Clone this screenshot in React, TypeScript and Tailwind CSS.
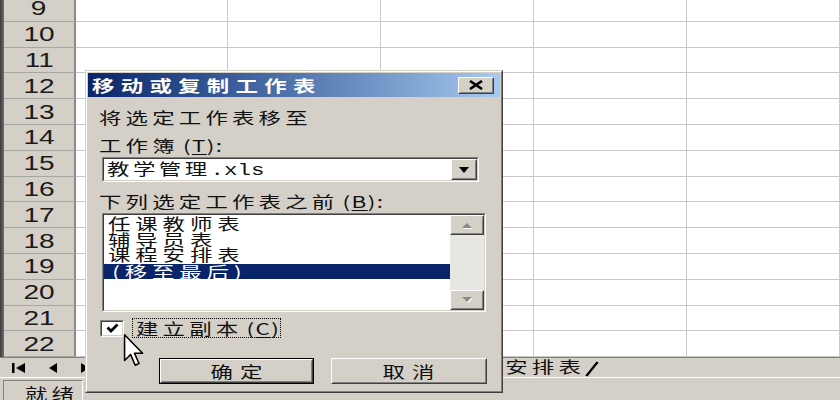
import React from 'react';

const ROWS = [9, 10, 11, 12, 13, 14, 15, 16, 17, 18, 19, 20, 21, 22];
const COLS = [152, 153, 153, 153, 153];

const cjk = "font-['Noto_Sans_CJK_SC','Noto_Sans',sans-serif]";

// the capture is stretched sideways, so CJK text is widened the same way
function Wide({ className = '', children }: { className?: string; children?: React.ReactNode }) {
  return (
    <span className={`inline-block origin-left scale-x-[1.4] whitespace-nowrap ${className}`}>
      {children}
    </span>
  );
}

function Raised({ className = '', children }: { className?: string; children?: React.ReactNode }) {
  return (
    <div
      className={`border border-t-white border-l-white border-r-[#404040] border-b-[#404040] bg-[#d4d0c8] ${className}`}
    >
      <div className="w-full h-full border border-t-[#d4d0c8] border-l-[#d4d0c8] border-r-[#808080] border-b-[#808080] flex items-center justify-center">
        {children}
      </div>
    </div>
  );
}

function Sunken({ className = '', children }: { className?: string; children?: React.ReactNode }) {
  return (
    <div
      className={`border border-t-[#808080] border-l-[#808080] border-r-white border-b-white ${className}`}
    >
      <div className="w-full h-full border border-t-[#404040] border-l-[#404040] border-r-[#d4d0c8] border-b-[#d4d0c8] bg-white flex">
        {children}
      </div>
    </div>
  );
}

function ScrollArrow({ up }: { up?: boolean }) {
  const d = up ? 'M2 7 L7 2 L12 7 Z' : 'M2 1 L7 6 L12 1 Z';
  return (
    <svg width="14" height="8" viewBox="0 0 14 8">
      <path d={d} fill="#ffffff" transform="translate(1 1)" />
      <path d={d} fill="#8a8a8a" />
    </svg>
  );
}

function Dialog() {
  return (
    <div className="absolute left-[85px] top-[70px] w-[418px] h-[323px] border border-t-[#d4d0c8] border-l-[#d4d0c8] border-r-[#404040] border-b-[#404040] bg-[#d4d0c8]">
      <div className="h-full border border-t-white border-l-white border-r-[#808080] border-b-[#808080] p-px flex flex-col">
        {/* title bar */}
        <div className="h-[24px] flex items-center justify-between bg-linear-to-r from-[#0a246a] to-[#a6caf0] pl-[4px] pr-[6px]">
          <Wide className="text-[16px] font-bold tracking-[4.5px] text-white leading-none">
            移动或复制工作表
          </Wide>
          <Raised className="w-[36px] h-[17px]">
            <svg width="16" height="10" viewBox="0 0 16 10">
              <path d="M2 1 L14 9 M14 1 L2 9" stroke="#000" strokeWidth="2.6" />
            </svg>
          </Raised>
        </div>

        <div className="text-[16px] text-[#111] pl-[11px] flex flex-col">
          <div className="mt-[10px] h-[20px] leading-[20px]">
            <Wide className="tracking-[3px]">将选定工作表移至</Wide>
          </div>
          <div className="mt-[8px] h-[20px] leading-[20px]">
            <Wide className="tracking-[3px]">
              工作簿<span className="tracking-[1px] ml-[3px]">(<span className="underline underline-offset-2">T</span>):</span>
            </Wide>
          </div>

          {/* workbook combo */}
          <Sunken className="mt-[2px] ml-[3px] w-[377px] h-[25px]">
            <div className="flex-1 flex items-center pl-[3px] leading-none">
              <Wide className="tracking-[2.5px]">
                教学管理<span className="font-['Liberation_Mono',monospace] tracking-[0px]">.xls</span>
              </Wide>
            </div>
            <Raised className="w-[26px] h-[21px]">
              <svg width="10" height="6" viewBox="0 0 10 6">
                <path d="M0 0 H10 L5 6 Z" fill="#000" />
              </svg>
            </Raised>
          </Sunken>

          <div className="mt-[9px] h-[20px] leading-[20px]">
            <Wide className="tracking-[3px]">
              下列选定工作表之前<span className="tracking-[1px] ml-[3px]">(<span className="underline underline-offset-2">B</span>):</span>
            </Wide>
          </div>

          {/* sheet list */}
          <Sunken className="mt-[2px] ml-[3px] w-[384px] h-[99px]">
            <div className="flex-1 pt-[1px] leading-[15px]">
              <div className="h-[15.5px] pl-[4px]">
                <Wide className="tracking-[3.5px]">任课教师表</Wide>
              </div>
              <div className="h-[15.5px] pl-[4px]">
                <Wide className="tracking-[3.5px]">辅导员表</Wide>
              </div>
              <div className="h-[15.5px] pl-[4px]">
                <Wide className="tracking-[3.5px]">课程安排表</Wide>
              </div>
              <div className="mt-[1px] h-[15.5px] pl-[4px] bg-[#0a246a] text-white">
                <Wide className="tracking-[3.5px]">
                  <span className="ml-[3px]">(</span>移至最后)
                </Wide>
              </div>
            </div>
            <div className="w-[34px] flex flex-col bg-[#e8e6e1]">
              <Raised className="w-full h-[20px]">
                <ScrollArrow up />
              </Raised>
              <div className="flex-1" />
              <Raised className="w-full h-[20px]">
                <ScrollArrow />
              </Raised>
            </div>
          </Sunken>

          {/* copy checkbox */}
          <div className="mt-[6px] h-[20px] flex items-center">
            <Sunken className="ml-px w-[24px] h-[17px]">
              <div className="flex-1 flex items-center justify-center">
                <svg width="13" height="10" viewBox="0 0 13 10">
                  <path d="M1.5 4.5 L5 8 L11.5 1.5" stroke="#000" strokeWidth="2.8" fill="none" />
                </svg>
              </div>
            </Sunken>
            <div className="ml-[8px] h-[20px] w-[149px] border border-dotted border-black flex items-center pl-[3px] leading-none">
              <Wide className="tracking-[3px]">
                建立副本<span className="tracking-[1px] ml-[3px]">(<span className="underline underline-offset-2">C</span>)</span>
              </Wide>
            </div>
          </div>

          {/* buttons */}
          <div className="mt-[20px] flex gap-[17px] pl-[60px]">
            <div className="border border-black">
              <Raised className="w-[153px] h-[24px]">
                <span className="inline-block scale-x-[1.4] tracking-[5px] pl-[5px] leading-none">确定</span>
              </Raised>
            </div>
            <Raised className="w-[156px] h-[26px]">
              <span className="inline-block scale-x-[1.4] tracking-[5px] pl-[5px] leading-none">取消</span>
            </Raised>
          </div>
        </div>
      </div>
    </div>
  );
}

export default function App() {
  return (
    <div className={`relative w-[840px] h-[400px] overflow-hidden bg-white ${cjk}`}>
      {/* worksheet grid */}
      <div className="h-[357px] overflow-hidden">
        <div className="-mt-[4px]">
          {ROWS.map((n) => (
            <div key={n} className="flex h-[25.8px]">
              <div className="w-[7px] bg-linear-to-r from-[#3c3c3c] to-[#6e6e6e]" />
              <div className="w-[72px] shrink-0 bg-[#d4d0c8] border-b border-b-[#a8a6a0] border-r-2 border-r-[#8c8a86] flex items-center justify-center">
                <span className="inline-block font-['Liberation_Sans',Arial,sans-serif] text-[20px] leading-none scale-x-[1.4] text-[#1a1a1a]">
                  {n}
                </span>
              </div>
              {COLS.map((w, i) => (
                <div
                  key={i}
                  style={{ width: w }}
                  className="shrink-0 border-b border-r border-[#c8c8c8]"
                />
              ))}
            </div>
          ))}
        </div>
      </div>

      {/* sheet tabs */}
      <div className="h-[20px] bg-[#d4d0c8] border-t border-t-[#808080] flex items-center">
        <div className="w-[85px] flex items-center">
          <svg width="85" height="14" viewBox="0 0 85 14">
            <rect x="12" y="2" width="2.5" height="10" fill="#000" />
            <path d="M25 2 L16 7 L25 12 Z" fill="#000" />
            <path d="M57 2 L49 7 L57 12 Z" fill="#000" />
            <path d="M81 2 L89 7 L81 12 Z" fill="#000" />
          </svg>
        </div>
        <div className="ml-[367px] flex items-center text-[16px] leading-none text-[#111]">
          <Wide className="tracking-[3px]">
            课程安排表
            <svg width="12" height="16" viewBox="0 0 12 16" className="inline-block align-middle -ml-[1px]">
              <path d="M2 15 L10 1" stroke="#000" strokeWidth="1.8" />
            </svg>
          </Wide>
        </div>
      </div>

      {/* status bar */}
      <div className="h-[23px] bg-[#d4d0c8] border-t border-t-white pt-[2px] pl-[3px]">
        <div className="w-[80px] h-full border-t border-l border-t-[#808080] border-l-[#808080] border-r border-r-white pl-[21px] pt-[2px] text-[16px] leading-[20px] text-[#111]">
          <Wide className="tracking-[3px]">就绪</Wide>
        </div>
      </div>

      <Dialog />

      {/* mouse pointer */}
      <svg
        className="absolute left-[121px] top-[333px]"
        width="26"
        height="36"
        viewBox="0 0 13 21"
      >
        <path
          d="M1 1 V16 L4.5 12.5 L7.2 18.8 L9.4 17.8 L6.8 11.8 H11.5 Z"
          fill="#ffffff"
          stroke="#000000"
          strokeWidth="0.9"
          strokeLinejoin="round"
        />
      </svg>
    </div>
  );
}
